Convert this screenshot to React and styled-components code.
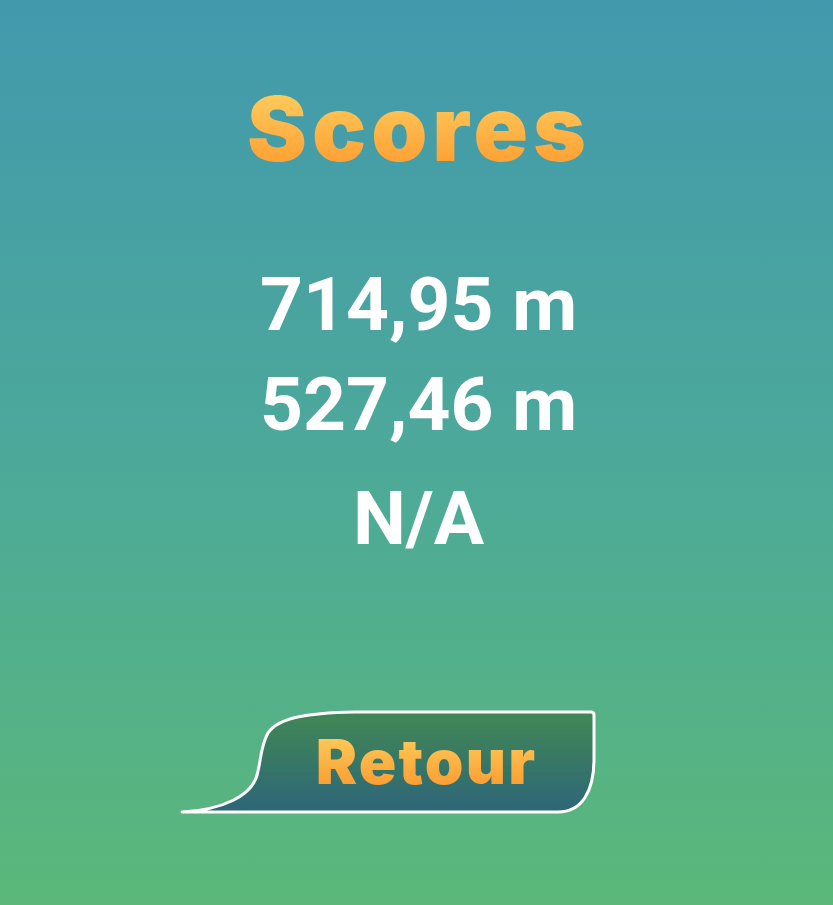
import React from "react";
import styled, { createGlobalStyle } from "styled-components";

const GlobalStyle = createGlobalStyle`
  html, body {
    margin: 0;
    padding: 0;
  }
  body {
    font-family: "Roboto", "Liberation Sans", sans-serif;
  }
`;

const Screen = styled.div`
  min-height: 905px;
  box-sizing: border-box;
  padding-top: 84px;
  display: flex;
  flex-direction: column;
  align-items: center;
  background: linear-gradient(180deg, #4299ad 0%, #4ca99a 50%, #5bb879 100%);
`;

const Title = styled.h1`
  margin: 0;
  font-family: "Inter", "Liberation Sans", sans-serif;
  font-weight: 900;
  font-size: 90px;
  line-height: 1;
  letter-spacing: 0.055em;
  padding-left: 0.055em;
  background: linear-gradient(180deg, #ffcb5c 10%, #ff9d31 95%);
  -webkit-background-clip: text;
  background-clip: text;
  color: transparent;
`;

const ScoreList = styled.div`
  margin-top: 80px;
  display: flex;
  flex-direction: column;
  align-items: center;
`;

const ScoreLine = styled.div`
  font-family: "Roboto", "Liberation Sans", sans-serif;
  font-weight: 700;
  font-size: 75px;
  line-height: 100px;
  color: #ffffff;
  margin-top: ${(p) => (p.$gap ? "14px" : "0")};
  padding-left: 4px;
`;

const BackButton = styled.button`
  position: relative;
  margin-top: 141px;
  margin-right: 55px;
  width: 418px;
  height: 106px;
  padding: 0 0 0 75px;
  border: none;
  background: none;
  cursor: pointer;
  display: flex;
  align-items: center;
  justify-content: center;
`;

const Shape = styled.svg`
  position: absolute;
  inset: 0;
  width: 100%;
  height: 100%;
  overflow: visible;
`;

const ButtonLabel = styled.span`
  position: relative;
  font-family: "Inter", "Liberation Sans", sans-serif;
  font-weight: 900;
  font-size: 62px;
  line-height: 1;
  letter-spacing: 0.035em;
  background: linear-gradient(180deg, #ffc958 10%, #fb9a2f 95%);
  -webkit-background-clip: text;
  background-clip: text;
  color: transparent;
`;

const scores = ["714,95 m", "527,46 m"];

export default function App() {
  return (
    <>
      <GlobalStyle />
      <Screen>
        <Title>Scores</Title>
        <ScoreList>
          {scores.map((s) => (
            <ScoreLine key={s}>{s}</ScoreLine>
          ))}
          <ScoreLine $gap>N/A</ScoreLine>
        </ScoreList>
        <BackButton>
          <Shape viewBox="0 0 418 106">
            <defs>
              <linearGradient id="btnFill" x1="0" y1="0" x2="0" y2="1">
                <stop offset="0.1" stopColor="#3f8458" />
                <stop offset="1" stopColor="#2d6679" />
              </linearGradient>
              <filter id="glow" x="-5%" y="-10%" width="110%" height="120%">
                <feGaussianBlur stdDeviation="0.6" />
              </filter>
            </defs>
            <path
              d="M 2 103 L 378 103 C 402 103 414 82 414 50 L 414 6 Q 414 3 411 3 L 175 3 C 125 4 98 9 88 24 C 81 36 81 50 78 62 C 74 88 40 101 2 103 Z"
              fill="url(#btnFill)"
              stroke="#ffffff"
              strokeWidth="3"
              strokeLinejoin="round"
              filter="url(#glow)"
            />
          </Shape>
          <ButtonLabel>Retour</ButtonLabel>
        </BackButton>
      </Screen>
    </>
  );
}
